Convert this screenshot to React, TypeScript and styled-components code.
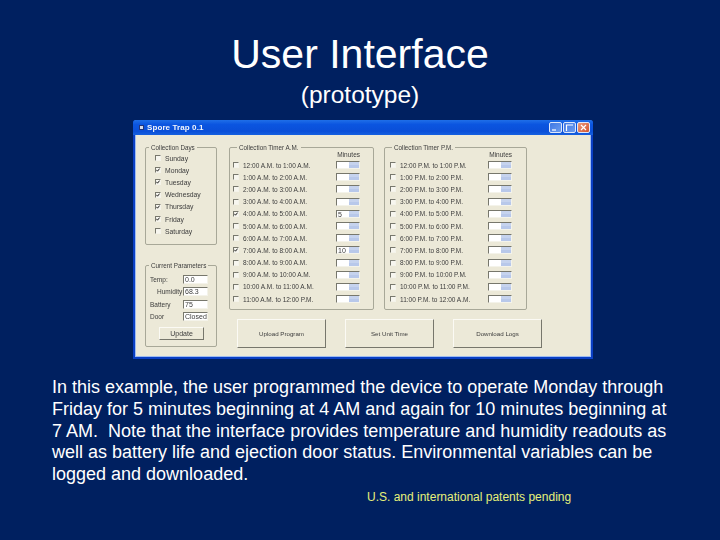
import * as React from 'react';
import styled, { createGlobalStyle } from 'styled-components';

const GlobalStyle = createGlobalStyle`
  html, body {
    margin: 0;
    padding: 0;
    background: #002060;
  }
`;

const Slide = styled.div`
  width: 720px;
  height: 540px;
  overflow: hidden;
  background: #002060;
  color: #fff;
  font-family: 'Liberation Sans', Arial, sans-serif;
`;

const Title = styled.h1`
  margin: 0;
  padding-top: 31px;
  font-size: 41px;
  line-height: 46px;
  font-weight: 400;
  text-align: center;
`;

const Subtitle = styled.h2`
  margin: 4px 0 0;
  font-size: 24.5px;
  line-height: 28px;
  font-weight: 400;
  text-align: center;
`;

const Window = styled.div`
  width: 460px;
  height: 239px;
  margin: 11px 0 0 133px;
  box-sizing: border-box;
  border: solid #0a3fc4;
  border-width: 0 2px 2px;
  border-radius: 3px 3px 0 0;
  background: #ece9d8;
  box-shadow: inset 1px 0 #9fbcf0, inset -1px 0 #9fbcf0, inset 0 -1px #9fbcf0;
  color: #3c3c3c;
  filter: blur(0.45px);
`;

const TitleBar = styled.div`
  height: 15px;
  margin: 0 -2px;
  padding: 0 3px 0 6px;
  display: flex;
  align-items: center;
  gap: 1px;
  background: linear-gradient(#1f6fe8, #0b55e0 30%, #0a4fd8 75%, #1560e0);
  border-radius: 3px 3px 0 0;
`;

const AppIcon = styled.div`
  width: 5px;
  height: 5px;
  background: #d8dce8;
  border: 1px solid #24357a;
  box-sizing: border-box;
`;

const TitleText = styled.span`
  flex: 1;
  margin-left: 2px;
  color: #f2f5fc;
  font-size: 8px;
  font-weight: 700;
  letter-spacing: 0.1px;
`;

const CaptionButton = styled.div<{ $close?: boolean }>`
  width: 13px;
  height: 11px;
  box-sizing: border-box;
  border: 1px solid #dfe8fa;
  border-radius: 2px;
  background: ${(p) =>
    p.$close ? 'linear-gradient(135deg, #e89a7c, #d4552f)' : 'linear-gradient(135deg, #3f78e4, #6c9cee)'};
  display: flex;
`;

const Client = styled.div`
  display: flex;
  gap: 12px;
  padding: 12px 0 0 10px;
`;

const LeftColumn = styled.div`
  width: 72px;
  display: flex;
  flex-direction: column;
  gap: 20px;
`;

const RightColumn = styled.div`
  display: flex;
  flex-direction: column;
  gap: 9px;
`;

const Groups = styled.div`
  display: flex;
  gap: 10px;
`;

const GroupBox = styled.div<{ $w: number; $h: number; $pad: number }>`
  position: relative;
  box-sizing: border-box;
  width: ${(p) => p.$w}px;
  height: ${(p) => p.$h}px;
  padding-left: ${(p) => p.$pad}px;
  border: 1px solid #a8a898;
  border-radius: 2px;
`;

const Legend = styled.span<{ $x: number }>`
  position: absolute;
  top: -5px;
  left: ${(p) => p.$x}px;
  padding: 0 2px;
  background: #ece9d8;
  font-size: 6.3px;
  line-height: 9px;
  white-space: nowrap;
`;

const DayList = styled.div`
  padding-top: 4px;
  display: grid;
  grid-auto-rows: 12.2px;
`;

const Row = styled.div`
  display: flex;
  align-items: center;
  gap: 4px;
  font-size: 6.8px;
  white-space: nowrap;
`;

const CheckBox = styled.div`
  flex: none;
  width: 6px;
  height: 6px;
  box-sizing: border-box;
  border: 1px solid;
  border-color: #77776c #f4f3ea #f4f3ea #77776c;
  background: #f7f6ef;
  display: flex;
`;

const MinutesHead = styled.div<{ $right: number }>`
  height: 11px;
  padding-right: ${(p) => p.$right}px;
  text-align: right;
  font-size: 6.5px;
  line-height: 13px;
`;

const TimeText = styled.span`
  flex: 1;
  font-size: 6.5px;
`;

const Spin = styled.div`
  flex: none;
  width: 24px;
  height: 8px;
  display: flex;
  box-sizing: border-box;
  border: 1px solid;
  border-color: #77776c #f4f3ea #f4f3ea #77776c;
  background: #fff;
  font-size: 7px;
  line-height: 7px;
  padding-left: 1px;
`;

const SpinValue = styled.span`
  flex: 1;
`;

const SpinArrows = styled.div`
  width: 10px;
  background: linear-gradient(#c6d3ee 0 45%, #f2f4fa 45% 55%, #b8c8ea 55%);
`;

const TimeRow = styled(Row)<{ $right: number }>`
  height: 12.2px;
  padding-right: ${(p) => p.$right}px;
`;

const ParamGrid = styled.div`
  padding: 9px 0 0 4px;
  display: grid;
  grid-template-columns: 33px 25px;
  grid-auto-rows: 12.4px;
  align-items: start;
  font-size: 6.5px;
`;

const ParamLabel = styled.span<{ $indent?: boolean }>`
  padding-left: ${(p) => (p.$indent ? 7 : 0)}px;
  line-height: 9px;
  white-space: nowrap;
`;

const ParamInput = styled.div`
  height: 9px;
  box-sizing: border-box;
  border: 1px solid;
  border-color: #77776c #f4f3ea #f4f3ea #77776c;
  background: #fff;
  padding-left: 1px;
  font-size: 7px;
  line-height: 7px;
  overflow: hidden;
`;

const Button = styled.div<{ $w: number; $h: number }>`
  box-sizing: border-box;
  width: ${(p) => p.$w}px;
  height: ${(p) => p.$h}px;
  border: 1px solid;
  border-color: #fbfaf4 #77776c #77776c #fbfaf4;
  background: #ece9d8;
  display: flex;
  align-items: center;
  justify-content: center;
  font-size: 6.2px;
`;

const UpdateButton = styled(Button)`
  margin: 2px 0 0 13px;
  font-size: 7px;
`;

const ButtonRow = styled.div`
  display: flex;
  gap: 19px;
  padding-left: 8px;
`;

const Body = styled.p`
  margin: 18px 0 0 52px;
  width: 622px;
  font-size: 18px;
  line-height: 21.8px;
`;

const Footnote = styled.div`
  margin: 4px 0 0 367px;
  color: #e6f07a;
  font-size: 12px;
  line-height: 14px;
`;

const days: [string, boolean][] = [
  ['Sunday', false],
  ['Monday', true],
  ['Tuesday', true],
  ['Wednesday', true],
  ['Thursday', true],
  ['Friday', true],
  ['Saturday', false],
];

const amTimes = [
  '12:00 A.M. to 1:00 A.M.',
  '1:00 A.M. to 2:00 A.M.',
  '2:00 A.M. to 3:00 A.M.',
  '3:00 A.M. to 4:00 A.M.',
  '4:00 A.M. to 5:00 A.M.',
  '5:00 A.M. to 6:00 A.M.',
  '6:00 A.M. to 7:00 A.M.',
  '7:00 A.M. to 8:00 A.M.',
  '8:00 A.M. to 9:00 A.M.',
  '9:00 A.M. to 10:00 A.M.',
  '10:00 A.M. to 11:00 A.M.',
  '11:00 A.M. to 12:00 P.M.',
];

const pmTimes = [
  '12:00 P.M. to 1:00 P.M.',
  '1:00 P.M. to 2:00 P.M.',
  '2:00 P.M. to 3:00 P.M.',
  '3:00 P.M. to 4:00 P.M.',
  '4:00 P.M. to 5:00 P.M.',
  '5:00 P.M. to 6:00 P.M.',
  '6:00 P.M. to 7:00 P.M.',
  '7:00 P.M. to 8:00 P.M.',
  '8:00 P.M. to 9:00 P.M.',
  '9:00 P.M. to 10:00 P.M.',
  '10:00 P.M. to 11:00 P.M.',
  '11:00 P.M. to 12:00 A.M.',
];

const params: [string, string, boolean][] = [
  ['Temp:', '0.0', false],
  ['Humidity', '68.3', true],
  ['Battery', '75', false],
  ['Door', 'Closed', false],
];

const amMinutes: Record<number, string> = { 4: '5', 7: '10' };

function Check({ on }: { on?: boolean }) {
  return (
    <CheckBox>
      {on && (
        <svg width="4" height="4" viewBox="0 0 4 4">
          <path d="M0.4 1.8 L1.5 3.2 L3.6 0.6" fill="none" stroke="#222" strokeWidth="1" />
        </svg>
      )}
    </CheckBox>
  );
}

function CaptionGlyph({ d }: { d: string }) {
  return (
    <svg width="11" height="9" viewBox="0 0 11 9">
      <path d={d} fill="none" stroke="#fff" strokeWidth="1.2" />
    </svg>
  );
}

function TimeGroup(props: {
  legend: string;
  times: string[];
  minutes: Record<number, string>;
  width: number;
  pad: number;
  right: number;
}) {
  return (
    <GroupBox $w={props.width} $h={163} $pad={props.pad}>
      <Legend $x={7}>{props.legend}</Legend>
      <MinutesHead $right={props.right}>Minutes</MinutesHead>
      {props.times.map((t, i) => (
        <TimeRow key={t} $right={props.right}>
          <Check on={!!props.minutes[i]} />
          <TimeText>{t}</TimeText>
          <Spin>
            <SpinValue>{props.minutes[i]}</SpinValue>
            <SpinArrows />
          </Spin>
        </TimeRow>
      ))}
    </GroupBox>
  );
}

export default function App() {
  return (
    <Slide>
      <GlobalStyle />
      <Title>User Interface</Title>
      <Subtitle>(prototype)</Subtitle>
      <Window>
        <TitleBar>
          <AppIcon />
          <TitleText>Spore Trap 0.1</TitleText>
          <CaptionButton><CaptionGlyph d="M2 7 H6" /></CaptionButton>
          <CaptionButton><CaptionGlyph d="M2.5 8 V2 H9" /></CaptionButton>
          <CaptionButton $close><CaptionGlyph d="M3 2 L8 7 M8 2 L3 7" /></CaptionButton>
        </TitleBar>
        <Client>
          <LeftColumn>
            <GroupBox $w={72} $h={98} $pad={9}>
              <Legend $x={3}>Collection Days</Legend>
              <DayList>
                {days.map(([d, on]) => (
                  <Row key={d}>
                    <Check on={on} />
                    {d}
                  </Row>
                ))}
              </DayList>
            </GroupBox>
            <GroupBox $w={72} $h={82} $pad={0}>
              <Legend $x={3}>Current Parameters</Legend>
              <ParamGrid>
                {params.map(([l, v, indent]) => (
                  <React.Fragment key={l}>
                    <ParamLabel $indent={indent}>{l}</ParamLabel>
                    <ParamInput>{v}</ParamInput>
                  </React.Fragment>
                ))}
              </ParamGrid>
              <UpdateButton $w={45} $h={13}>Update</UpdateButton>
            </GroupBox>
          </LeftColumn>
          <RightColumn>
            <Groups>
              <TimeGroup legend="Collection Timer A.M." times={amTimes} minutes={amMinutes} width={145} pad={3} right={13} />
              <TimeGroup legend="Collection Timer P.M." times={pmTimes} minutes={{}} width={143} pad={5} right={14} />
            </Groups>
            <ButtonRow>
              <Button $w={89} $h={29}>Upload Program</Button>
              <Button $w={89} $h={29}>Set Unit Time</Button>
              <Button $w={89} $h={29}>Download Logs</Button>
            </ButtonRow>
          </RightColumn>
        </Client>
      </Window>
      <Body>
        In this example, the user programmed the device to operate Monday through Friday for 5 minutes
        beginning at 4 AM and again for 10 minutes beginning at 7 AM.&nbsp; Note that the interface provides
        temperature and humidity readouts as well as battery life and ejection door status. Environmental
        variables can be logged and downloaded.
      </Body>
      <Footnote>U.S. and international patents pending</Footnote>
    </Slide>
  );
}
